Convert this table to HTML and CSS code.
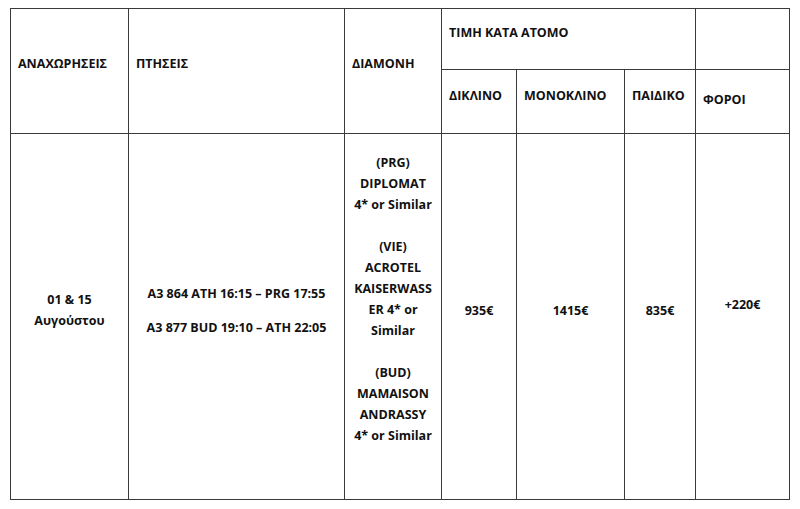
FILE: index.html
```html
<!DOCTYPE html>
<html lang="el">
<head>
<meta charset="utf-8">
<link rel="stylesheet" href="styles.css">
</head>
<body>
<table class="tour">
  <colgroup>
    <col class="c-dep">
    <col class="c-fly">
    <col class="c-hotel">
    <col class="c-dbl">
    <col class="c-sgl">
    <col class="c-chd">
    <col class="c-tax">
  </colgroup>
  <thead>
    <tr class="r-head1">
      <th rowspan="2" class="h-dep"><p class="ph">ΑΝΑΧΩΡΗΣΕΙΣ</p></th>
      <th rowspan="2" class="h-fly"><p class="ph">ΠΤΗΣΕΙΣ</p></th>
      <th rowspan="2" class="h-hotel"><p class="ph">ΔΙΑΜΟΝΗ</p></th>
      <th colspan="3" class="h-price"><p class="ps">ΤΙΜΗ ΚΑΤΑ ΑΤΟΜΟ</p></th>
      <th class="h-empty"></th>
    </tr>
    <tr class="r-head2">
      <th class="h-dbl"><p class="ps">ΔΙΚΛΙΝΟ</p></th>
      <th class="h-sgl"><p class="ps">ΜΟΝΟΚΛΙΝΟ</p></th>
      <th class="h-chd"><p class="ps">ΠΑΙΔΙΚΟ</p></th>
      <th class="h-tax"><p class="ps-low">ΦΟΡΟΙ</p></th>
    </tr>
  </thead>
  <tbody>
    <tr class="r-body">
      <td class="center"><p class="ps">01 &amp; 15<br>Αυγούστου</p></td>
      <td class="center">
        <p class="ps">A3 864 ATH 16:15 – PRG 17:55</p>
        <p class="ps">A3 877 BUD 19:10 – ATH 22:05</p>
      </td>
      <td class="center hotels">
        <p class="hotel">(PRG)<br>DIPLOMAT<br>4* or Similar</p>
        <p class="hotel">(VIE)<br>ACROTEL<br>KAISERWASS<br>ER 4* or<br>Similar</p>
        <p class="hotel last">(BUD)<br>MAMAISON<br>ANDRASSY<br>4* or Similar</p>
      </td>
      <td class="center"><p class="ps">935€</p></td>
      <td class="center"><p class="ps">1415€</p></td>
      <td class="center"><p class="ps">835€</p></td>
      <td class="center"><p class="ps-tax">+220€</p></td>
    </tr>
  </tbody>
</table>
</body>
</html>
```

FILE: styles.css
```css
html, body {
  background: #ffffff;
}
body {
  margin: 8px 0 0 10px;
  font-family: "Open Sans", "Noto Sans", "DejaVu Sans", sans-serif;
  font-weight: 700;
  font-size: 12.5px;
  color: #111111;
}
.tour {
  border-collapse: collapse;
  table-layout: fixed;
  width: 780px;
}
.c-dep { width: 118px; }
.c-fly { width: 216px; }
.c-hotel { width: 97px; }
.c-dbl { width: 75px; }
.c-sgl { width: 108px; }
.c-chd { width: 71px; }
.c-tax { width: 94px; }

.tour th, .tour td {
  border: 1px solid #3a3a3a;
  padding: 0 2px 0 7px;
  vertical-align: middle;
  text-align: left;
  font-weight: 700;
  line-height: 21px;
  white-space: nowrap;
}
.r-head1 { height: 61px; }
.r-head2 { height: 64px; }
.r-body { height: 366px; }

.tour p { margin: 0; }
.ph { margin: 0 0 16px !important; }
.ps { margin: 0 0 13px !important; }
.ps-low { margin: 0 0 5px !important; }
.ps-tax { margin: 0 0 24px !important; }

.h-dep { padding-left: 7px; }
.h-fly { padding-left: 9px; }
.h-hotel { padding-left: 4px; }
.h-price { padding-left: 8px; }
.h-dbl { padding-left: 4px; }
.h-sgl { padding-left: 9px; }
.h-chd { padding-left: 8px; }
.h-tax { padding-left: 10px; }

.tour td.center {
  text-align: center;
  padding: 0 1px;
}
.fly-line { font-size: 12.5px; }
.hotel { margin: 0 0 21px !important; }
.hotel.last { margin: 0 0 36px !important; }
```
